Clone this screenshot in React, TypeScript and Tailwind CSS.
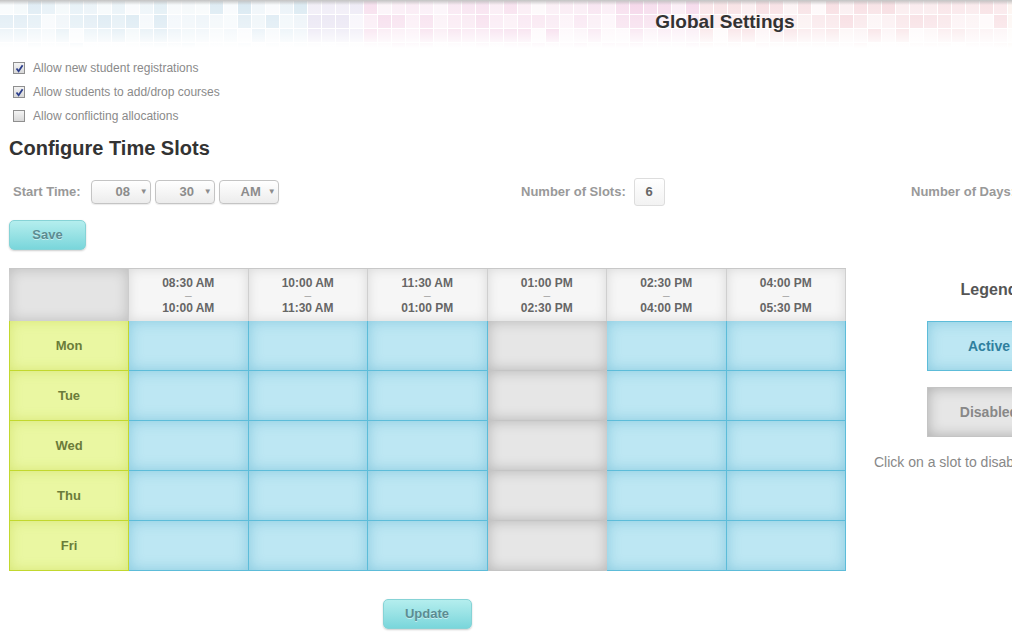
import React from "react";

const font = { fontFamily: '"Liberation Sans", Arial, sans-serif' };

const slots = [
  ["08:30 AM", "10:00 AM"],
  ["10:00 AM", "11:30 AM"],
  ["11:30 AM", "01:00 PM"],
  ["01:00 PM", "02:30 PM"],
  ["02:30 PM", "04:00 PM"],
  ["04:00 PM", "05:30 PM"],
];

const days = ["Mon", "Tue", "Wed", "Thu", "Fri"];
const disabledSlot = 3;

// deterministic noise for the mosaic banner
const rand = (n: number) => {
  const x = Math.sin(n * 12.9898) * 43758.5453;
  return x - Math.floor(x);
};

const tint = (x: number) => {
  if (x < 300) return "#c9dfec";
  if (x < 360) return "#dcd6ec";
  if (x < 700) return "#f0c4df";
  if (x < 1000) return "#f3ccd2";
  return "#f6d8c8";
};

const Mosaic = () => {
  const cells: React.ReactNode[] = [];
  for (let i = 0; i < 104; i++) {
    for (let j = 0; j < 4; j++) {
      const x = i * 14;
      const o = 0.1 + rand(i * 7 + j * 131) * 0.6;
      cells.push(
        <rect key={`${i}-${j}`} x={x} y={j * 14 + 1} width={13} height={13} fill={tint(x)} opacity={o} />
      );
    }
  }
  return (
    <svg width="1450" height="48" className="absolute inset-0">
      <defs>
        <linearGradient id="fade" x1="0" y1="0" x2="0" y2="1">
          <stop offset="0" stopColor="#fff" stopOpacity="0" />
          <stop offset="0.6" stopColor="#fff" stopOpacity="0.3" />
          <stop offset="1" stopColor="#fff" stopOpacity="1" />
        </linearGradient>
        <linearGradient id="shade" x1="0" y1="0" x2="0" y2="1">
          <stop offset="0" stopColor="#bbb" stopOpacity="0.9" />
          <stop offset="1" stopColor="#bbb" stopOpacity="0" />
        </linearGradient>
      </defs>
      {cells}
      <rect x="0" y="0" width="1450" height="48" fill="url(#fade)" />
      <rect x="0" y="0" width="1450" height="5" fill="url(#shade)" />
    </svg>
  );
};

const Check = ({ on }: { on: boolean }) => (
  <span className="w-[12px] h-[12px] border border-[#8f8f8f] bg-gradient-to-b from-[#f4f4f4] to-[#d8d8d8] flex items-center justify-center">
    {on ? (
      <svg width="9" height="9" viewBox="0 0 9 9">
        <path d="M1.5 4.5 L3.6 7.2 L7.6 1.2" stroke="#2c3f8c" strokeWidth="1.8" fill="none" />
      </svg>
    ) : null}
  </span>
);

const Select = ({ value }: { value: string }) => (
  <div className="w-[60px] h-[24px] rounded-[4px] border border-[#c4c4c4] bg-gradient-to-b from-white to-[#ececec] shadow-[0_1px_1px_rgba(0,0,0,0.08)] flex items-center pl-[16px] text-[13px] font-bold text-[#8c8c8c]">
    <span className="w-[30px] text-center">{value}</span>
    <span className="text-[8px] ml-[2px]">▼</span>
  </div>
);

const TealButton = ({ label, w }: { label: string; w: string }) => (
  <button
    className={`${w} h-[30px] rounded-[5px] border border-[#86d3d6] bg-gradient-to-b from-[#b4eeee] to-[#79d6db] shadow-[0_1px_2px_rgba(0,0,0,0.2)] text-[13px] font-bold text-[#5b8c92] [text-shadow:0_1px_0_rgba(255,255,255,0.5)]`}
  >
    {label}
  </button>
);

const App = () => {
  return (
    <div className="w-[1012px] h-[640px] overflow-hidden bg-white" style={font}>
      <div className="w-[1450px]">
        <div className="relative h-[48px]">
          <Mosaic />
          <div className="relative flex justify-center pt-[8px] text-[19px] font-bold text-[#333]">Global Settings</div>
        </div>

        <div className="pl-[13px] pt-[13px] flex flex-col gap-[10px] text-[12px] text-[#8a8a8a]">
          <label className="flex items-center gap-[8px] h-[14px]">
            <Check on={true} /> Allow new student registrations
          </label>
          <label className="flex items-center gap-[8px] h-[14px]">
            <Check on={true} /> Allow students to add/drop courses
          </label>
          <label className="flex items-center gap-[8px] h-[14px]">
            <Check on={false} /> Allow conflicting allocations
          </label>
        </div>

        <h2 className="pl-[9px] pt-[13px] text-[20px] font-bold text-[#333] leading-[24px]">Configure Time Slots</h2>

        <div className="flex items-center pt-[17px] h-[47px] text-[13px] font-bold text-[#999]">
          <div className="w-[521px] pl-[13px] flex items-center gap-[4px]">
            <span className="mr-[6px]">Start Time:</span>
            <Select value="08" />
            <Select value="30" />
            <Select value="AM" />
          </div>
          <div className="w-[390px] flex items-center">
            <span className="mr-[8px]">Number of Slots:</span>
            <div className="w-[31px] h-[28px] border border-[#ddd] rounded-[3px] bg-gradient-to-b from-white to-[#f2f2f2] flex items-center justify-center text-[#666]">
              6
            </div>
          </div>
          <div className="flex items-center">
            <span>Number of Days:</span>
          </div>
        </div>

        <div className="pl-[9px] pt-[13px]">
          <TealButton label="Save" w="w-[77px]" />
        </div>

        <div className="flex pt-[18px]">
          <div className="pl-[9px]">
            <div className="w-[837px] grid grid-cols-[120px_repeat(6,1fr)] border-t border-[#c8c8c8]">
              <div className="h-[52px] bg-[#e4e4e4] shadow-[inset_0_0_14px_rgba(0,0,0,0.18)] border-r border-[#ccc]" />
              {slots.map(([a, b]) => (
                <div
                  key={a}
                  className="h-[52px] bg-[#f6f6f6] shadow-[inset_0_0_12px_rgba(0,0,0,0.12)] border-r border-[#cfcfcf] flex flex-col items-center pt-[8px] text-[12px] font-bold text-[#666] leading-[12.5px]"
                >
                  <span>{a}</span>
                  <span className="text-[#aaa] font-normal">–</span>
                  <span>{b}</span>
                </div>
              ))}
              {days.map((d) => (
                <React.Fragment key={d}>
                  <div className="h-[50px] bg-[#eaf7a2] shadow-[inset_0_0_12px_rgba(180,200,40,0.35)] border-l border-r border-b border-[#c2d82e] flex items-center justify-center text-[13px] font-bold text-[#6b7c3a]">
                    {d}
                  </div>
                  {slots.map((s, i) =>
                    i === disabledSlot ? (
                      <div
                        key={s[0]}
                        className="h-[50px] bg-[#e6e6e6] shadow-[inset_0_0_14px_rgba(0,0,0,0.22)] border-b border-[#c4c4c4]"
                      />
                    ) : (
                      <div
                        key={s[0]}
                        className="h-[50px] bg-[#bde7f3] shadow-[inset_0_0_14px_rgba(40,150,190,0.35)] border-r border-b border-[#5dbcd9]"
                      />
                    )
                  )}
                </React.Fragment>
              ))}
            </div>
            <div className="w-[837px] flex justify-center pt-[28px]">
              <div className="ml-[-1px]">
                <TealButton label="Update" w="w-[89px]" />
              </div>
            </div>
          </div>

          <div className="w-[230px] ml-[28px] flex flex-col items-center">
            <div className="pt-[10px] text-[16px] font-bold text-[#555]">Legend</div>
            <div className="mt-[19px] w-[124px] h-[50px] bg-[#bde7f3] shadow-[inset_0_0_14px_rgba(40,150,190,0.35)] border border-[#5dbcd9] flex items-center justify-center text-[14px] font-bold text-[#2f7f9e]">
              Active
            </div>
            <div className="mt-[16px] w-[124px] h-[50px] bg-[#e6e6e6] shadow-[inset_0_0_14px_rgba(0,0,0,0.25)] border border-[#c4c4c4] flex items-center justify-center text-[14px] font-bold text-[#888]">
              Disabled
            </div>
            <div className="mt-[15px] self-start text-[14px] text-[#888] whitespace-nowrap">Click on a slot to disable/enable it</div>
          </div>
        </div>
      </div>
    </div>
  );
};

export default App;
